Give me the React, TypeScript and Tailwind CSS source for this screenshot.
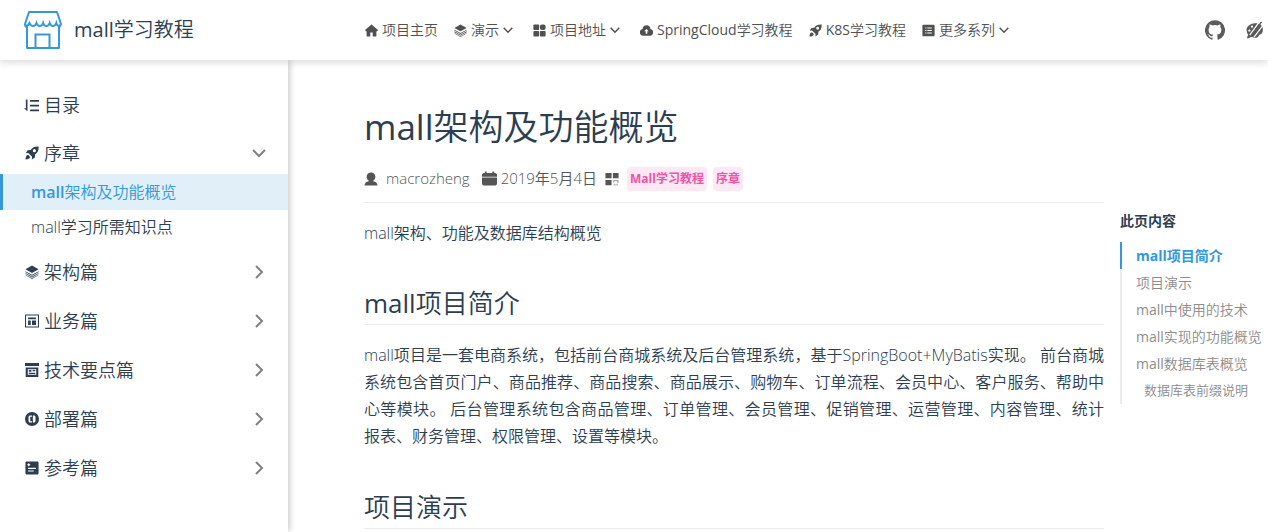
import type { ReactNode } from 'react'

type IconProps = { className?: string }

function Svg({ className = '', box = '0 0 16 16', children }: IconProps & { box?: string; children: ReactNode }) {
  return (
    <svg viewBox={box} fill="currentColor" aria-hidden="true" className={`shrink-0 ${className}`}>
      {children}
    </svg>
  )
}

function ShopLogo() {
  return (
    <svg viewBox="0 0 38 38" fill="none" stroke="currentColor" strokeWidth="2" className="size-[38px] text-[#3498db]" aria-hidden="true">
      <path d="M5 1h28l4 12q-1 3-2 3v21H3V16q-2 0-2-3z" strokeLinejoin="round" />
      <path d="M1.500 14q2 2 4-2 1 3 3.500 3t3.500-3q1 3 3.300 3t3.300-3q1 3 3.300 3t3.300-3q1 3 3.300 3t3.300-3q1 4 4 2" />
      <path d="M11.500 37V23.500h14V37" />
    </svg>
  )
}

const HomeIcon = ({ className }: IconProps) => (
  <Svg className={className}>
    <path d="M8 .5 0 7.500 1 9h1v6.500h4.500v-5h3v5H14V9h1l1-1.500z" />
  </Svg>
)

const LayersIcon = ({ className }: IconProps) => (
  <Svg className={className}>
    <path d="M8 .5.5 4.800 8 9l7.500-4.200z" />
    <path d="M.5 7 8 11.200 15.500 7v1L8 12.300.5 8z" />
    <path d="M.5 9 8 13.200 15.500 9v1L8 14.300.5 10z" />
    <path d="M.5 11 8 15.200l7.500-4.200v.8L8 16 .5 11.800z" />
  </Svg>
)

const GridIcon = ({ className }: IconProps) => (
  <Svg className={className}>
    <rect x=".5" y=".5" width="7" height="7" rx="1" />
    <rect x="8.500" y=".5" width="7" height="7" rx="2.500" />
    <rect x=".5" y="8.500" width="7" height="7" rx="1" />
    <rect x="8.500" y="8.500" width="7" height="7" rx="1" />
  </Svg>
)

const CloudIcon = ({ className }: IconProps) => (
  <Svg className={className}>
    <path fillRule="evenodd" d="M8 1.500a5 5 0 0 1 4.800 4.500A4.300 4.300 0 0 1 12 14.500H4A4.300 4.300 0 0 1 3.200 6 5 5 0 0 1 8 1.500zM8 6 5.300 9H7v3h2V9h1.700z" />
  </Svg>
)

const RocketIcon = ({ className }: IconProps) => (
  <Svg className={className}>
    <path fillRule="evenodd" d="M15.500.5C11 .3 8.500 1.500 6.500 4.500L3 4.800.8 8.300l3-.3 4.300 4.300-.3 3 3.500-2.300.3-3.500c3-2 4.200-4.500 3.900-9zM10.700 3.500a1.800 1.800 0 1 1 0 3.600 1.800 1.800 0 0 1 0-3.600z" />
    <path d="M3.500 10C1.500 10.500.8 12.500.5 15.500c3-.3 5-1 5.500-3z" />
  </Svg>
)

const ListIcon = ({ className }: IconProps) => (
  <Svg className={className}>
    <path fillRule="evenodd" d="M2 .8h12A1.500 1.500 0 0 1 15.500 2.300v11.400a1.500 1.500 0 0 1-1.500 1.500H2A1.500 1.500 0 0 1 .5 13.700V2.300A1.500 1.500 0 0 1 2 .8zM4 4.200v1.300h1.500V4.200zm2.500 0v1.300H12V4.200zM4 7.300v1.300h1.500V7.300zm2.500 0v1.300H12V7.300zM4 10.400v1.300h1.500v-1.300zm2.500 0v1.300H12v-1.300z" />
  </Svg>
)

const SortIcon = ({ className }: IconProps) => (
  <Svg className={className}>
    <path d="M2 1.500h1.700v12.500L0 11h2zM6.500 2.200H16v1.800H6.500zM6.500 7.200H16V9H6.500zM6.500 12.200H16V14H6.500z" />
  </Svg>
)

const TableIcon = ({ className }: IconProps) => (
  <Svg className={className}>
    <path fillRule="evenodd" d="M0 .5h16v15H0zm1.200 1.200v12.600h13.600V1.700z" />
    <path d="M3.500 4h9v2h-9zM3.500 7.500h3V12.500h-3zM8 7.500h4.500v5H8z" />
  </Svg>
)

const PanelIcon = ({ className }: IconProps) => (
  <Svg className={className}>
    <path d="M0 0h16v3.500H0z" />
    <path fillRule="evenodd" d="M.8 5h14.400v11H.8zM3.200 7v6.500h9.600V7zM4.300 8h3v2h-3zM8.700 8h3v1.500h-3zM4.300 11h7.400v1.500H4.300z" />
  </Svg>
)

const CircleIcon = ({ className }: IconProps) => (
  <Svg className={className}>
    <path fillRule="evenodd" d="M8 0a8 8 0 1 1 0 16A8 8 0 0 1 8 0zM5 4 4 5.500v5L5 12h3v-1.500H6v-5h2V4zm4 0v8h2l1-1.500v-5L11 4z" />
  </Svg>
)

const NoteIcon = ({ className }: IconProps) => (
  <Svg className={className}>
    <path fillRule="evenodd" d="M1.500.5h13l1 1v13l-1 1h-13l-1-1v-13zM4.300 2.300 3.500 3.500l-1.200.8 1.200.8.8 1.200.8-1.200 1.200-.8-1.200-.8zM3.500 7.800v1.200h9V7.800zm0 3v1.200h6.500v-1.200z" />
  </Svg>
)

const UserIcon = ({ className }: IconProps) => (
  <Svg className={className}>
    <path d="M8 .5c3 0 5 2 5 4.800 0 2-1 3.700-2.500 4.700v.5c3 .5 4.800 2 5 5H.5c.2-3 2-4.500 5-5V10C4 9 3 7.300 3 5.300 3 2.500 5 .5 8 .5z" />
  </Svg>
)

const CalendarIcon = ({ className }: IconProps) => (
  <Svg className={className}>
    <path d="M3 .5h2V2h6V.5h2V2h1.500L16 3.500V6H0V3.500L1.500 2H3zM0 7h16v7l-1.500 1.500h-13L0 14z" />
  </Svg>
)

const TagIcon = ({ className }: IconProps) => (
  <Svg className={className}>
    <path d="M.5 1h7v6h-7zM9 1h6.500v6H9zM.5 9h7v6h-7z" />
    <path d="M9 9h6.500v3.500H14v-2h-3.500V12H9zm1 4.500h2v2h-2zm3 0h2l-1 2h-1z" opacity=".5" />
  </Svg>
)

const GithubIcon = ({ className }: IconProps) => (
  <Svg className={className} box="0 0 24 24">
    <path d="M12 .3a12 12 0 0 0-3.800 23.400c.6.1.8-.3.8-.6v-2c-3.300.7-4-1.600-4-1.600-.6-1.400-1.400-1.800-1.400-1.800-1-.7.1-.7.1-.7 1.200 0 1.900 1.200 1.900 1.200 1 1.800 2.800 1.300 3.500 1 0-.8.400-1.300.7-1.600-2.700-.3-5.500-1.300-5.500-6 0-1.200.5-2.300 1.300-3.100-.2-.4-.6-1.600 0-3.200 0 0 1-.3 3.400 1.200a11.500 11.500 0 0 1 6 0c2.300-1.500 3.300-1.200 3.300-1.200.6 1.600.2 2.800 0 3.200.9.8 1.300 1.900 1.300 3.200 0 4.600-2.800 5.600-5.500 5.900.5.400.9 1 .9 2.200v3.300c0 .3.1.7.8.6A12 12 0 0 0 12 .3" />
  </Svg>
)

function PaletteIcon({ className }: IconProps) {
  return (
    <Svg className={className}>
      <path fillRule="evenodd" d="M8 2c4-.5 7 2 7 5.500 0 2.500-1 4-2.500 4.500-1.200.3-1 1-1.500 1.700-.5.800-1.500 1.300-3 1.300l-2-.5C3.500 14 2 12.500 1.200 11 .8 10 .5 9 .5 8c0-3.500 3.500-5.800 7.500-6zM3 7.500a1 1 0 1 0 0 2 1 1 0 0 0 0-2zm2.300-3.500a1 1 0 1 0 0 2 1 1 0 0 0 0-2z" />
      <path d="M3 13 12 .5M7 14.500 15 4" stroke="#fff" strokeWidth="1.100" />
      <path d="M1 15.500q0-3 2-3.300l1.700 1.200Q4 15.500 1 15.500z" />
      <path d="M4.500 13 13.800.8" stroke="currentColor" strokeWidth="1.300" />
    </Svg>
  )
}

function Chevron({ className = '' }: IconProps) {
  return (
    <svg viewBox="0 0 14 14" fill="none" stroke="currentColor" strokeWidth="2" className={`shrink-0 ${className}`} aria-hidden="true">
      <path d="m4 1 6 6-6 6" />
    </svg>
  )
}

const NAV = [
  { icon: HomeIcon, label: '项目主页' },
  { icon: LayersIcon, label: '演示', menu: true },
  { icon: GridIcon, label: '项目地址', menu: true },
  { icon: CloudIcon, latin: 'SpringCloud', label: '学习教程' },
  { icon: RocketIcon, latin: 'K8S', label: '学习教程' },
  { icon: ListIcon, label: '更多系列', menu: true },
]

const GROUPS = [
  { icon: LayersIcon, label: '架构篇' },
  { icon: TableIcon, label: '业务篇' },
  { icon: PanelIcon, label: '技术要点篇' },
  { icon: CircleIcon, label: '部署篇' },
  { icon: NoteIcon, label: '参考篇' },
]

const TOC = [
  { label: '项目演示' },
  { latin: 'mall', label: '中使用的技术' },
  { latin: 'mall', label: '实现的功能概览' },
  { latin: 'mall', label: '数据库表概览' },
]

function Navbar() {
  return (
    <header className="relative z-10 flex h-[60px] items-center justify-between bg-white pl-6 pr-1 shadow-[0_2px_8px_rgba(0,0,0,0.16)]">
      <a href="#home" className="flex w-[341px] items-center gap-3 text-xl">
        <ShopLogo />
        <span>
          <span className="font-medium">mall</span>学习教程
        </span>
      </a>
      <nav className="flex flex-1 items-center gap-4 text-sm text-[#505050]">
        {NAV.map(({ icon: Icon, latin, label, menu }) => {
          const body = (
            <>
              <Icon className="mr-1 size-[13px]" />
              {latin && <span className="font-medium">{latin}</span>}
              {label}
            </>
          )
          return menu ? (
            <button key={label} type="button" className="mr-1 flex items-center whitespace-nowrap">
              {body}
              <Chevron className="ml-1 size-[10px] rotate-90" />
            </button>
          ) : (
            <a key={latin ?? label} href="#nav" className="flex items-center whitespace-nowrap">
              {body}
            </a>
          )
        })}
      </nav>
      <div className="flex items-center gap-[21px] text-[#5c5c5c]">
        <a href="#github" aria-label="GitHub">
          <GithubIcon className="size-5" />
        </a>
        <button type="button" aria-label="外观">
          <PaletteIcon className="size-[18px]" />
        </button>
      </div>
    </header>
  )
}

function Sidebar() {
  return (
    <aside className="w-72 shrink-0 pt-[21px] text-lg shadow-[2px_0_6px_rgba(0,0,0,0.2)]">
      <a href="#toc" className="flex h-12 items-center gap-[5px] pl-6">
        <SortIcon className="size-[15px]" />
        目录
      </a>
      <button type="button" className="flex h-[45px] w-full items-center gap-[5px] pl-[25px] pr-[22px] pt-[2px]">
        <RocketIcon className="size-[14px]" />
        序章
        <Chevron className="ml-auto size-[14px] rotate-90 text-[#808080]" />
      </button>
      <a href="#overview" className="flex h-9 items-center border-l-[3px] border-[#3498db] bg-[#e1eff9] pl-7 text-base text-[#3498db]">
        <span className="font-semibold">mall</span>架构及功能概览
      </a>
      <a href="#knowledge" className="flex h-[34px] items-center pl-[31px] text-base">
        mall学习所需知识点
      </a>
      <div className="pt-[3px]">
        {GROUPS.map(({ icon: Icon, label }) => (
          <button key={label} type="button" className="flex h-[49px] w-full items-center gap-[5px] pl-[25px] pr-[22px]">
            <Icon className="size-[14px]" />
            {label}
            <Chevron className="ml-auto size-[14px] text-[#808080]" />
          </button>
        ))}
      </div>
    </aside>
  )
}

function Article() {
  return (
    <article className="min-w-0 flex-1 pt-[43px]">
      <h1 className="text-[35px] leading-[48px]">
        <span className="font-medium">mall</span>架构及功能概览
      </h1>
      <div className="flex h-[52px] items-center border-b border-[#eaecef] pt-1 text-[15px] text-[#555]">
        <UserIcon className="mr-2 size-[14px]" />
        macrozheng
        <CalendarIcon className="ml-3 mr-1 size-[15px]" />
        2019年5月4日
        <TagIcon className="mx-2 size-[14px]" />
        <span className="mr-[6px] rounded bg-[#fde8f4] px-[3px] text-xs leading-6 font-bold text-[#ef55a5]">Mall学习教程</span>
        <span className="rounded bg-[#fde8f4] px-[3px] text-xs leading-6 font-bold text-[#ef55a5]">序章</span>
      </div>
      <p className="mt-[17px] text-base leading-[27px]">mall架构、功能及数据库结构概览</p>
      <h2 className="mt-[38px] border-b border-[#eaecef] pb-[2px] text-[26px] leading-[37px]">
        <span className="font-medium">mall</span>项目简介
      </h2>
      <p className="mt-[17px] text-justify text-base leading-[27px]">
        mall项目是一套电商系统，包括前台商城系统及后台管理系统，基于SpringBoot+MyBatis实现。
        前台商城系统包含首页门户、商品推荐、商品搜索、商品展示、购物车、订单流程、会员中心、客户服务、帮助中心等模块。
        后台管理系统包含商品管理、订单管理、会员管理、促销管理、运营管理、内容管理、统计报表、财务管理、权限管理、设置等模块。
      </p>
      <h2 className="mt-[39px] border-b border-[#eaecef] pb-[2px] text-[26px] leading-[37px]">项目演示</h2>
    </article>
  )
}

function PageToc() {
  return (
    <aside className="w-[148px] shrink-0 pt-[150px] text-sm">
      <h2 className="leading-[22px] font-bold">此页内容</h2>
      <nav className="mt-[10px] border-l-2 border-[#eaecef] leading-[27px] whitespace-nowrap text-[#8c8c8c]">
        <a href="#intro" className="-ml-[2px] block border-l-2 border-[#3498db] pl-[14px] font-bold text-[#3498db]">
          mall项目简介
        </a>
        {TOC.map(({ latin, label }) => (
          <a key={label} href="#section" className="block pl-[14px]">
            {latin && <span className="font-medium">{latin}</span>}
            {label}
          </a>
        ))}
        <a href="#prefix" className="block pl-[22px] text-[13px]">
          数据库表前缀说明
        </a>
      </nav>
    </aside>
  )
}

export default function App() {
  return (
    <div className="flex h-screen flex-col overflow-hidden bg-white font-['Open_Sans','Noto_Sans_CJK_SC',sans-serif] font-[350] text-[#2c3e50]">
      <Navbar />
      <div className="flex min-h-0 flex-1">
        <Sidebar />
        <main className="flex min-w-0 flex-1 gap-4 pl-[76px]">
          <Article />
          <PageToc />
        </main>
      </div>
    </div>
  )
}
